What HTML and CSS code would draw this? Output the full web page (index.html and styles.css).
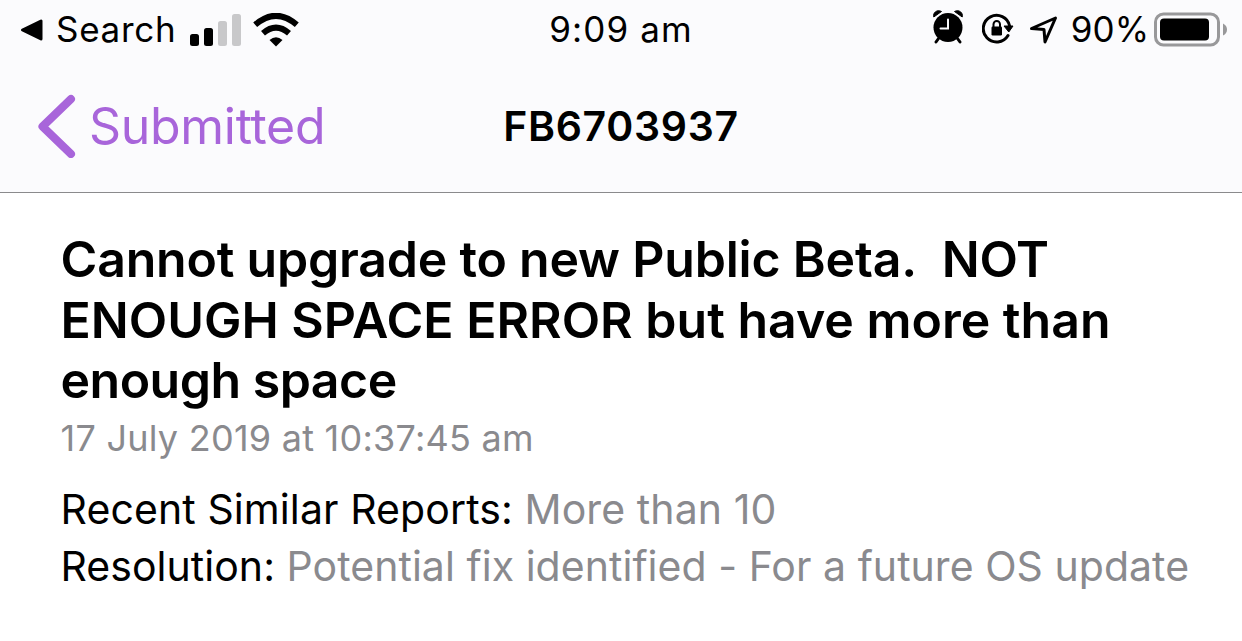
FILE: index.html
```html
<!DOCTYPE html>
<html lang="en">
<head>
    <meta charset="UTF-8">
    <meta name="viewport" content="width=device-width, initial-scale=1.0">
    <title>FB6703937</title>
    <link rel="stylesheet" href="styles.css">
</head>
<body>

    <header class="top">
        <div class="status-bar">
            <div class="status-left">
                <svg class="icon-return" width="24" height="24" viewBox="0 0 24 24">
                    <path d="M2.5 12 L21 3 V21 Z" stroke="#000" stroke-width="3" stroke-linejoin="round"/>
                </svg>
                <span class="search">Search</span>
                <svg class="icon-signal" width="52" height="32" viewBox="0 0 52 32">
                    <rect x="0" y="20" width="9" height="12" rx="2.5"/>
                    <rect x="14" y="14" width="9" height="18" rx="2.5"/>
                    <rect x="28" y="7" width="9" height="25" rx="2.5" fill="#c8c8ca"/>
                    <rect x="42" y="0" width="9" height="32" rx="2.5" fill="#c8c8ca"/>
                </svg>
                <!-- wifi -->
                <svg class="icon-wifi" width="46" height="34" viewBox="0 0 46 34">
                    <path d="M2.2 11.8 Q23 -6.2 43.8 11.8" fill="none" stroke="#000" stroke-width="6"/>
                    <path d="M10 20.2 Q23 9 36 20.2" fill="none" stroke="#000" stroke-width="6"/>
                    <path d="M16.5 27 Q23 21.5 29.5 27 L23 33.5 Z"/>
                </svg>
            </div>

            <div class="time">9:09 am</div>

            <div class="status-right">
                <!-- alarm -->
                <svg class="icon-alarm" width="30" height="34" viewBox="0 0 30 34">
                    <circle cx="15" cy="17.5" r="14.5"/>
                    <path d="M.8 7 C-.5 3 4 -1 8.5 1.5 Z M29.2 7 C30.5 3 26 -1 21.5 1.5 Z" stroke="#000" stroke-linejoin="round"/>
                    <path d="M5.5 28.5 L3 32 M24.5 28.5 L27 32" stroke="#000" stroke-width="3" stroke-linecap="round"/>
                    <path d="M15 9.5 V18.5 H7.5" fill="none" stroke="#fafafc" stroke-width="2" stroke-linecap="round"/>
                </svg>
                <!-- rotation lock -->
                <svg class="icon-lock" width="32" height="32" viewBox="0 0 32 32">
                    <path d="M26 22.5 A13.3 13.3 0 1 1 27.6 13" fill="none" stroke="#000" stroke-width="3" stroke-linecap="round"/>
                    <path d="M22 13 H31 L26.8 19 Z" stroke="#000" stroke-linejoin="round"/>
                    <rect x="9.5" y="13.5" width="10.5" height="9" rx="1.2"/>
                    <path d="M11.5 14 V11.2 A3.25 3.25 0 0 1 18 11.2 V14" fill="none" stroke="#000" stroke-width="2"/>
                </svg>
                <!-- location -->
                <svg class="icon-location" width="30" height="30" viewBox="0 0 30 30">
                    <path d="M2.5 13.5 L26.5 3 L16 27 L15 14.5 Z" fill="none" stroke="#000" stroke-width="3" stroke-linejoin="round"/>
                </svg>
                <span class="percent">90%</span>
                <svg class="icon-battery" width="74" height="36" viewBox="0 0 74 36">
                    <rect x="1.5" y="2" width="63" height="31" rx="8" fill="none" stroke="#98989a" stroke-width="3"/>
                    <rect x="6" y="6.5" width="49" height="22" rx="4"/>
                    <path d="M69 11.5 Q73 13.5 73 17.5 Q73 21.5 69 23.5 Z" fill="#98989a"/>
                </svg>
            </div>
        </div>

        <div class="nav-bar">
            <a class="back">
                <svg class="icon-back" width="38" height="64" viewBox="0 0 38 64">
                    <path d="M33 5 L4.5 32.5 L33 60" fill="none" stroke="#a865da" stroke-width="8" stroke-linecap="round" stroke-linejoin="round"/>
                </svg>
                <span class="back-label">Submitted</span>
            </a>
            <div class="title">FB6703937</div>
        </div>
    </header>

    <main class="report">
        <h1><span class="line-1">Cannot upgrade to new Public Beta.&nbsp; NOT</span><br><span class="line-2">ENOUGH SPACE ERROR but have more than</span><br><span class="line-3">enough space</span></h1>
        <div class="date">17 July 2019 at 10:37:45 am</div>
        <div class="info">
            <div class="row similar">Recent Similar Reports: <span class="value">More than 10</span></div>
            <div class="row">Resolution: <span class="value">Potential fix identified - For a future OS update</span></div>
        </div>
    </main>

</body>
</html>
```
FILE: styles.css
```css
body {
    margin: 0;
    background: #fff;
    color: #000;
    font-family: Inter, "Liberation Sans", sans-serif;
    white-space: nowrap;
}

svg {
    display: block;
    flex: none;
}

.top {
    background: #fbfbfd;
    border-bottom: 1px solid #8a8a8c;
}

.status-bar {
    display: grid;
    grid-template-columns: 1fr auto 1fr;
    align-items: center;
    height: 59px;
    padding: 0 14px;
    margin-bottom: 1px;
    font-size: 35px;
    line-height: 59px;
}

.status-left,
.status-right {
    display: flex;
    align-items: center;
}

.status-right {
    justify-content: flex-end;
}

.icon-return {
    margin-left: 6px;
}

.search {
    margin-left: 12px;
    letter-spacing: 0.7px;
}

.time {
    letter-spacing: 1.1px;
}

.icon-signal {
    margin-left: 14px;
}

.icon-wifi {
    margin-left: 11px;
}

.icon-alarm {
    margin-bottom: 5px;
}

.icon-lock {
    margin-left: 19px;
    margin-bottom: 2px;
}

.icon-location {
    margin-left: 15px;
}

.percent {
    margin-left: 12px;
}

.icon-battery {
    margin-left: 5px;
}

.nav-bar {
    display: grid;
    grid-template-columns: 1fr auto 1fr;
    align-items: center;
    height: 132px;
    padding: 0 38px;
}

.back {
    display: flex;
    align-items: center;
    color: #a865da;
    font-size: 50px;
}

.back-label {
    margin-left: 13px;
    letter-spacing: -0.3px;
}

.title {
    font-size: 41px;
    font-weight: 600;
    letter-spacing: 0.7px;
}

.report {
    padding: 36px 60.5px 0;
}

h1 {
    margin: 0;
    font-size: 50px;
    font-weight: 600;
    line-height: 60.7px;
}

.line-1 {
    letter-spacing: -0.2px;
}

.line-3 {
    letter-spacing: -0.5px;
}

.date {
    color: #8a8a8e;
    font-size: 36px;
    letter-spacing: 0.25px;
    line-height: 54px;
}

.info {
    margin-top: 16px;
    font-size: 41px;
    letter-spacing: 0.04px;
    line-height: 57px;
}

.similar {
    letter-spacing: 0.1px;
}

.value {
    color: #8a8a8e;
}
```
